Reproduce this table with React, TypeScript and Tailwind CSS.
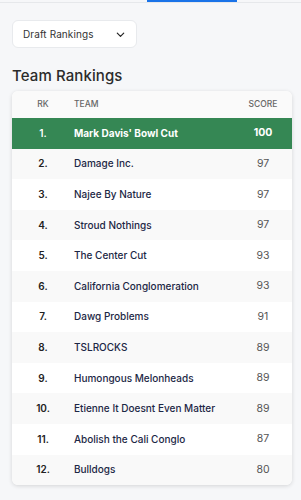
import React from "react";

const rows: [number, string, number][] = [
  [1, "Mark Davis' Bowl Cut", 100],
  [2, "Damage Inc.", 97],
  [3, "Najee By Nature", 97],
  [4, "Stroud Nothings", 97],
  [5, "The Center Cut", 93],
  [6, "California Conglomeration", 93],
  [7, "Dawg Problems", 91],
  [8, "TSLROCKS", 89],
  [9, "Humongous Melonheads", 89],
  [10, "Etienne It Doesnt Even Matter", 89],
  [11, "Abolish the Cali Conglo", 87],
  [12, "Bulldogs", 80],
];

export default function App() {
  return (
    <div
      className="w-[301px] h-[500px] bg-[#f6f7f9] overflow-hidden"
      style={{ fontFamily: "Inter, 'Noto Sans', sans-serif" }}
    >
      <div className="h-[3px] border-b border-[#e6e8eb] flex">
        <div className="ml-[147px] w-[90px] h-[2px] bg-[#1a73e8]" />
      </div>
      <div className="px-[12px] pt-[17px]">
        <div className="w-[125px] h-[28px] bg-white border border-[#e8eaed] rounded-[6px] flex items-center justify-between pl-[10px] pr-[10px]">
          <span className="text-[10px] text-[#333] tracking-[0.1px]">Draft Rankings</span>
          <svg width="11" height="11" viewBox="0 0 24 24" fill="none" stroke="#222" strokeWidth="2.6" strokeLinecap="round" strokeLinejoin="round">
            <path d="M5 9l7 7 7-7" />
          </svg>
        </div>
        <div className="mt-[17px] text-[15px] font-medium text-[#2b2b2b] leading-[22px] tracking-[0.1px]">Team Rankings</div>
        <div className="mt-[4px] w-[280px] bg-white rounded-[6px] shadow-[0_1px_4px_rgba(0,0,0,0.14)] overflow-hidden">
          <div className="h-[27px] bg-[#fafafa] flex items-center text-[8.5px] text-[#666] uppercase font-medium">
            <div className="w-[62px] text-center">RK</div>
            <div className="flex-1">Team</div>
            <div className="w-[56px] text-center pr-[2px]">Score</div>
          </div>
          {rows.map(([rk, name, score], i) => {
            const first = i === 0;
            const bg = first ? "bg-[#358754]" : i % 2 === 1 ? "bg-[#f9f9f9]" : "bg-white";
            return (
              <div key={rk} className={`h-[30.6px] flex items-center ${bg}`}>
                <div className={`w-[62px] text-center text-[10px] font-semibold ${first ? "text-white" : "text-[#222]"}`}>
                  {rk}.
                </div>
                <div className={`flex-1 text-[10px] ${first ? "text-white font-bold" : "text-[#1c2745] font-medium"}`}>
                  {name}
                </div>
                <div className={`w-[56px] text-center pr-[2px] text-[10.5px] ${first ? "text-white font-bold" : "text-[#555]"}`}>
                  {score}
                </div>
              </div>
            );
          })}
        </div>
      </div>
    </div>
  );
}
